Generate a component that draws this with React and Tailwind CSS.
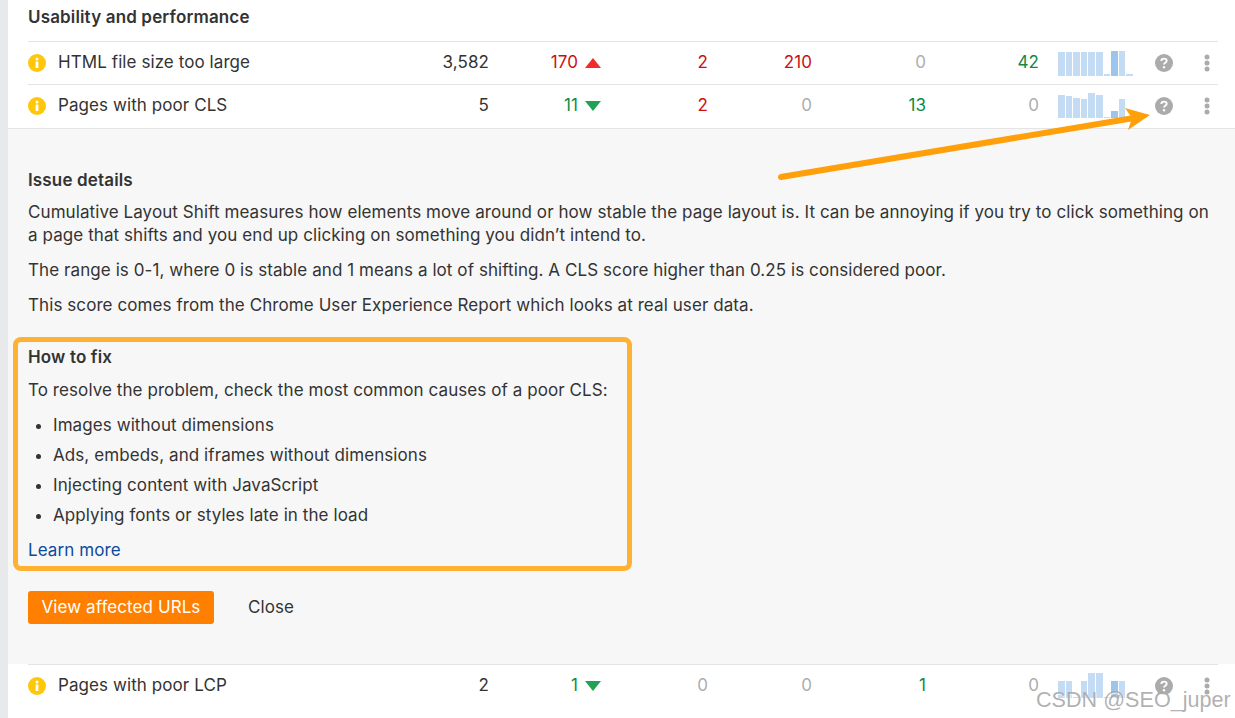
import React from 'react';

function InfoIcon() {
  return (
    <svg width="18" height="18" viewBox="0 0 18 18" className="shrink-0">
      <circle cx="9" cy="9" r="9" fill="#ffc70a" />
      <circle cx="9" cy="5" r="1.5" fill="#fff" />
      <rect x="7.6" y="7.6" width="2.8" height="6.4" rx="0.5" fill="#fff" />
    </svg>
  );
}

function HelpIcon() {
  return (
    <svg width="18" height="18" viewBox="0 0 18 18">
      <circle cx="9" cy="9" r="9" fill="#ababab" />
      <path d="M6.3 7.1c0-1.6 1.2-2.5 2.7-2.5s2.7.9 2.7 2.2c0 1.9-2.7 1.9-2.7 3.6" fill="none" stroke="#fff" strokeWidth="1.9" />
      <circle cx="9" cy="13.3" r="1.2" fill="#fff" />
    </svg>
  );
}

function Dots() {
  return (
    <svg width="6" height="18" viewBox="0 0 6 18">
      <circle cx="3" cy="3" r="2.5" fill="#ababab" />
      <circle cx="3" cy="9" r="2.5" fill="#ababab" />
      <circle cx="3" cy="15" r="2.5" fill="#ababab" />
    </svg>
  );
}

function Bars({ data, dark }) {
  return (
    <div className="w-[75px] ml-[19px] h-[25px] flex items-end gap-[1px] shrink-0">
      {data.map((h, i) => (
        <div
          key={i}
          className={i === dark ? 'w-[6.6px] bg-[#9cc5ec]' : 'w-[6.6px] bg-[#c3dcf4]'}
          style={{ height: h }}
        />
      ))}
    </div>
  );
}

const RED = 'text-[#cc0f12]';
const GREEN = 'text-[#0f8a45]';
const GRAY = 'text-[#adadad]';

function Row({ name, count, change, up, cols, bars, dark, className }) {
  return (
    <div className={`flex items-center ml-5 mr-[17px] border-[#e4e4e4] ${className}`}>
      <InfoIcon />
      <div className="w-[431px] ml-3 flex justify-between">
        <span>{name}</span>
        <span>{count}</span>
      </div>
      <div className={`w-[112px] flex justify-end items-center gap-[7px] ${up ? RED : GREEN}`}>
        <span>{change}</span>
        <svg width="16" height="10" viewBox="0 0 16 10">
          {up ? <path d="M8 0 16 10H0Z" fill="#f22c2c" /> : <path d="M0 0H16L8 10Z" fill="#20a254" />}
        </svg>
      </div>
      <span className={`w-[107px] text-right ${cols[0][1]}`}>{cols[0][0]}</span>
      <span className={`w-[104px] text-right ${cols[1][1]}`}>{cols[1][0]}</span>
      <span className={`w-[114px] text-right ${cols[2][1]}`}>{cols[2][0]}</span>
      <span className={`w-[113px] text-right ${cols[3][1]}`}>{cols[3][0]}</span>
      <Bars data={bars} dark={dark} />
      <div className="ml-[22px] flex"><HelpIcon /></div>
      <div className="ml-[31px] flex"><Dots /></div>
    </div>
  );
}

export default function App() {
  return (
    <div className="relative h-[718px] overflow-hidden flex bg-white text-[#333] text-[17px] tracking-[0.08px] font-['Inter',sans-serif]">
      <div className="w-2 bg-[#e8e9eb] shrink-0" />
      <main className="flex-1 min-w-0">
        <h2 className="ml-5 h-[41px] pt-[5px] text-[17px] tracking-[0.15px] leading-6 font-semibold">Usability and performance</h2>
        <Row
          name="HTML file size too large"
          count="3,582"
          change="170"
          up
          cols={[['2', RED], ['210', RED], ['0', GRAY], ['42', GREEN]]}
          bars={[24, 24, 24, 24, 24, 24, 2, 25, 25, 2]}
          dark={7}
          className="h-[43px] border-t"
        />
        <Row
          name="Pages with poor CLS"
          count="5"
          change="11"
          cols={[['2', RED], ['0', GRAY], ['13', GREEN], ['0', GRAY]]}
          bars={[23, 22, 20, 19, 25, 23, 1, 7, 19, 1]}
          dark={7}
          className="h-[44px] pb-[2px] border-t"
        />

        <section className="h-[536px] bg-[#f7f7f7] border-t border-[#e4e4e4] pl-5 pr-[17px] pt-[39px]">
          <h3 className="font-semibold text-[17px] tracking-[0.15px] leading-6">Issue details</h3>
          <p className="mt-[9px] leading-[23px]">
            Cumulative Layout Shift measures how elements move around or how stable the page layout is. It can be annoying if you try to click something on a page that shifts and you end up clicking on something you didn’t intend to.
          </p>
          <p className="mt-3 leading-[23px]">The range is 0-1, where 0 is stable and 1 means a lot of shifting. A CLS score higher than 0.25 is considered poor.</p>
          <p className="mt-3 leading-[23px]">This score comes from the Chrome User Experience Report which looks at real user data.</p>

          <div className="mt-5 -ml-[15px] w-[619px] h-[234px] border-[5px] border-[#ffb133] rounded-lg pl-[10px] pt-[3px]">
            <h3 className="font-semibold text-[17px] tracking-[0.15px] leading-6">How to fix</h3>
            <p className="mt-[10px] leading-[23px]">To resolve the problem, check the most common causes of a poor CLS:</p>
            <ul className="mt-2 ml-[25px] list-disc">
              <li className="h-[30px] leading-[30px]">Images without dimensions</li>
              <li className="h-[30px] leading-[30px]">Ads, embeds, and iframes without dimensions</li>
              <li className="h-[30px] leading-[30px]">Injecting content with JavaScript</li>
              <li className="h-[30px] leading-[30px]">Applying fonts or styles late in the load</li>
            </ul>
            <a className="block mt-[9px] leading-[23px] text-[#0b4a9e]">Learn more</a>
          </div>

          <div className="mt-5 flex items-center">
            <button className="h-[33px] w-[186px] rounded-[3px] bg-[#ff7f00] text-white">View affected URLs</button>
            <button className="ml-[34px]">Close</button>
          </div>
        </section>

        <Row
          name="Pages with poor LCP"
          count="2"
          change="1"
          cols={[['0', GRAY], ['0', GRAY], ['1', GREEN], ['0', GRAY]]}
          bars={[17, 17, 1, 17, 25, 25, 1, 17, 17, 1]}
          dark={7}
          className="h-[42px] border-t"
        />
      </main>

      {/* annotation arrow */}
      <svg className="absolute left-[770px] top-[100px] pointer-events-none" width="390" height="90" viewBox="0 0 390 90">
        <path d="M11 77 364 18" stroke="#ff9f0a" strokeWidth="6" strokeLinecap="round" fill="none" />
        <path d="M355 8 380 15 358 30 362 18Z" fill="#ff9f0a" />
      </svg>

      {/* watermark */}
      <div className="absolute left-[1036px] top-[686px] text-[21.6px] tracking-normal leading-[28px] whitespace-nowrap font-['Liberation_Sans',sans-serif] text-[#a3a3a3]/85 [text-shadow:1px_1px_1px_rgba(255,255,255,0.8)]">
        CSDN @SEO_juper
      </div>
    </div>
  );
}
